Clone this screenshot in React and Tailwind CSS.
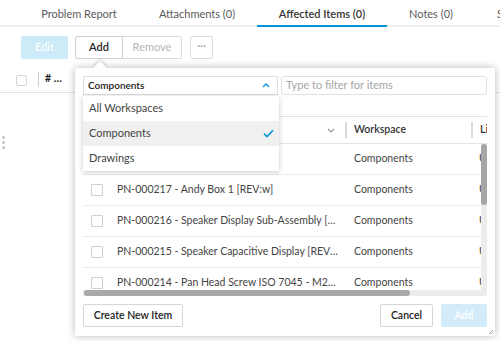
import React from "react";

const rows = [
  { name: "", ws: "Components", cb: false },
  { name: "PN-000217 - Andy Box 1 [REV:w]", ws: "Components", cb: true },
  { name: "PN-000216 - Speaker Display Sub-Assembly [REV:A]", ws: "Components", cb: true },
  { name: "PN-000215 - Speaker Capacitive Display [REV:A]", ws: "Components", cb: true },
  { name: "PN-000214 - Pan Head Screw ISO 7045 - M2.5 x 6", ws: "Components", cb: true },
];

function Check() {
  return (
    <svg width="11" height="9" viewBox="0 0 11 9" fill="none">
      <path d="M1 4.6 L4 7.5 L10 1.2" stroke="#0696d7" strokeWidth="1.6" />
    </svg>
  );
}

export default function App() {
  return (
    <div className="relative w-[500px] h-[341px] overflow-hidden bg-white font-['Lato',sans-serif] text-[10.5px] text-[#3c3c3c]">
      {/* Tabs */}
      <div className="flex h-[27px] pl-[21px] border-b-2 border-[#efefef] text-[11px] text-[#5a5a5a]">
        <div className="w-[116px] h-[27px] flex items-center justify-center pt-[1px] shrink-0">Problem Report</div>
        <div className="w-[120px] h-[27px] flex items-center justify-center pt-[1px] shrink-0">Attachments (0)</div>
        <div className="w-[130px] h-[27px] flex items-center justify-center pt-[3px] shrink-0 border-b-2 border-[#0696d7] font-semibold text-[#333]">Affected Items (0)</div>
        <div className="w-[88px] h-[27px] flex items-center justify-center pt-[1px] shrink-0">Notes (0)</div>
        <div className="w-[60px] h-[27px] flex items-center pl-[22px] pt-[1px] shrink-0">Sourcing</div>
      </div>

      {/* Toolbar */}
      <div className="flex mt-[9px] pl-[21px] h-[23px] text-[11px]">
        <div className="w-[47px] h-[23px] rounded-[2px] bg-[#cdeaf8] text-white flex items-center justify-center">Edit</div>
        <div className="ml-[7px] w-[48px] h-[23px] rounded-l-[2px] border border-[#cfcfcf] bg-white text-[#222] font-semibold flex items-center justify-center">Add</div>
        <div className="w-[59px] h-[23px] rounded-r-[2px] border border-l-0 border-[#dcdcdc] text-[#b5b5b5] flex items-center justify-center">Remove</div>
        <div className="ml-[8px] w-[23px] h-[23px] rounded-[2px] border border-[#dcdcdc] text-[#999] flex items-center justify-center pb-[3px]">···</div>
      </div>

      {/* Background table header */}
      <div className="mt-[7px] h-[27px] border-b border-[#e3e3e3] flex items-center">
        <div className="ml-[16px] mt-[2px] w-[11px] h-[11px] rounded-[2px] border border-[#d4d4d4]" />
        <div className="ml-[11px] w-px h-[15px] bg-[#d0d0d0]" />
        <div className="ml-[6px] font-bold text-[#222] text-[10.5px]">#&nbsp;…</div>
        <div className="ml-[13px] w-px h-[15px] bg-[#d0d0d0]" />
      </div>

      {/* side handle dots */}
      <div className="mt-[43px] pl-[2px] flex flex-col gap-[2px]">
        <div className="w-[3px] h-[3px] rounded-full bg-[#c4c4c4]" />
        <div className="w-[3px] h-[3px] rounded-full bg-[#c4c4c4]" />
        <div className="w-[3px] h-[3px] rounded-full bg-[#c4c4c4]" />
      </div>

      {/* Popover */}
      <div className="absolute left-[75px] top-[68px] w-[420px] h-[268px] bg-white rounded-[2px] shadow-[0_0_9px_rgba(0,0,0,0.28)] px-[8px] pt-[8px] flex flex-col">
        {/* Filters */}
        <div className="flex h-[19px]">
          <div className="w-[195px] h-[19px] border border-[#dedede] flex items-center pl-[4px] pr-[7px] text-[10px] font-semibold text-[#222]">
            <span className="flex-1">Components</span>
            <svg width="8" height="5" viewBox="0 0 8 5" fill="none">
              <path d="M1 4 L4 1 L7 4" stroke="#0696d7" strokeWidth="1.4" />
            </svg>
          </div>
          <div className="ml-[3px] w-[206px] h-[19px] rounded-[3px] border border-[#e0e0e0] flex items-center pl-[4px] text-[11px] text-[#a5a5a5]">
            Type to filter for items
          </div>
        </div>

        {/* Table */}
        <div className="relative mt-[21px] w-[404px] h-[180px] overflow-hidden border-t border-[#e3e3e3]">
          <div className="w-[560px]">
            <div className="flex h-[27px] border-b border-[#e3e3e3] items-center font-semibold text-[#333]">
              <div className="w-[262px] h-full flex items-center justify-end pr-[9px]">
                <svg width="8" height="5" viewBox="0 0 8 5" fill="none" className="mr-[1px]">
                  <path d="M1 1 L4 4 L7 1" stroke="#999" strokeWidth="1.1" />
                </svg>
              </div>
              <div className="w-[2px] h-[16px] bg-[#dadada]" />
              <div className="w-[124px] pl-[7px]">Workspace</div>
              <div className="w-[2px] h-[16px] bg-[#dadada]" />
              <div className="pl-[7px]">Lifecycle</div>
            </div>
            {rows.map((r, i) => (
              <div key={i} className="flex h-[31px] items-center border-b border-[#ececec] text-[#444]">
                <div className="w-[262px] flex items-center pl-[8px] pr-[7px]">
                  <div className="w-[12px] h-[12px] shrink-0 rounded-[1px] border border-[#cfcfcf]" />
                  <span className="ml-[14px] truncate">{r.name}</span>
                </div>
                <div className="w-[126px] pl-[9px]">{r.ws}</div>
                <div className="pl-[8px]">Unreleased</div>
              </div>
            ))}
          </div>
          {/* vertical scrollbar */}
          <div className="absolute right-0 top-[27px] bottom-[6px] w-[6px] bg-[#ececec]">
            <div className="h-[61px] w-full rounded-[3px] bg-[#a6a6a6]" />
          </div>
          {/* horizontal scrollbar */}
          <div className="absolute left-0 bottom-0 right-0 h-[6px] bg-[#ececec]">
            <div className="ml-[1px] w-[326px] h-full rounded-[3px] bg-[#a9a9a9]" />
          </div>
        </div>

        {/* Footer */}
        <div className="mt-[8px] flex h-[23px] text-[10.5px] font-semibold">
          <div className="w-[100px] h-[23px] rounded-[2px] border border-[#d6d6d6] text-[#222] flex items-center justify-center">Create New Item</div>
          <div className="flex-1" />
          <div className="w-[53px] h-[23px] rounded-[2px] border border-[#d6d6d6] text-[#222] flex items-center justify-center">Cancel</div>
          <div className="ml-[8px] w-[46px] h-[23px] rounded-[2px] bg-[#d3ecf9] text-white flex items-center justify-center">Add</div>
        </div>

        {/* dropdown list */}
        <div className="absolute left-[8px] top-[28px] w-[196px] bg-white shadow-[0_1px_5px_rgba(0,0,0,0.22)] text-[11px] text-[#444]">
          <div className="h-[25px] flex items-center pl-[6px]">All Workspaces</div>
          <div className="h-[25px] flex items-center pl-[6px] pr-[5px] bg-[#f0f0f0]">
            <span className="flex-1">Components</span>
            <Check />
          </div>
          <div className="h-[25px] flex items-center pl-[6px]">Drawings</div>
        </div>

        {/* resize grip */}
        <svg className="absolute right-[1px] bottom-[1px]" width="6" height="6" viewBox="0 0 6 6">
          <path d="M5 1 L1 5 M5 3.5 L3.5 5" stroke="#888" strokeWidth="0.8" />
        </svg>
      </div>

      {/* Arrow */}
      <div className="absolute left-[95px] top-[63px] w-[10px] h-[10px] rotate-45 bg-white shadow-[-2px_-2px_3px_rgba(0,0,0,0.12)]" />
    </div>
  );
}
